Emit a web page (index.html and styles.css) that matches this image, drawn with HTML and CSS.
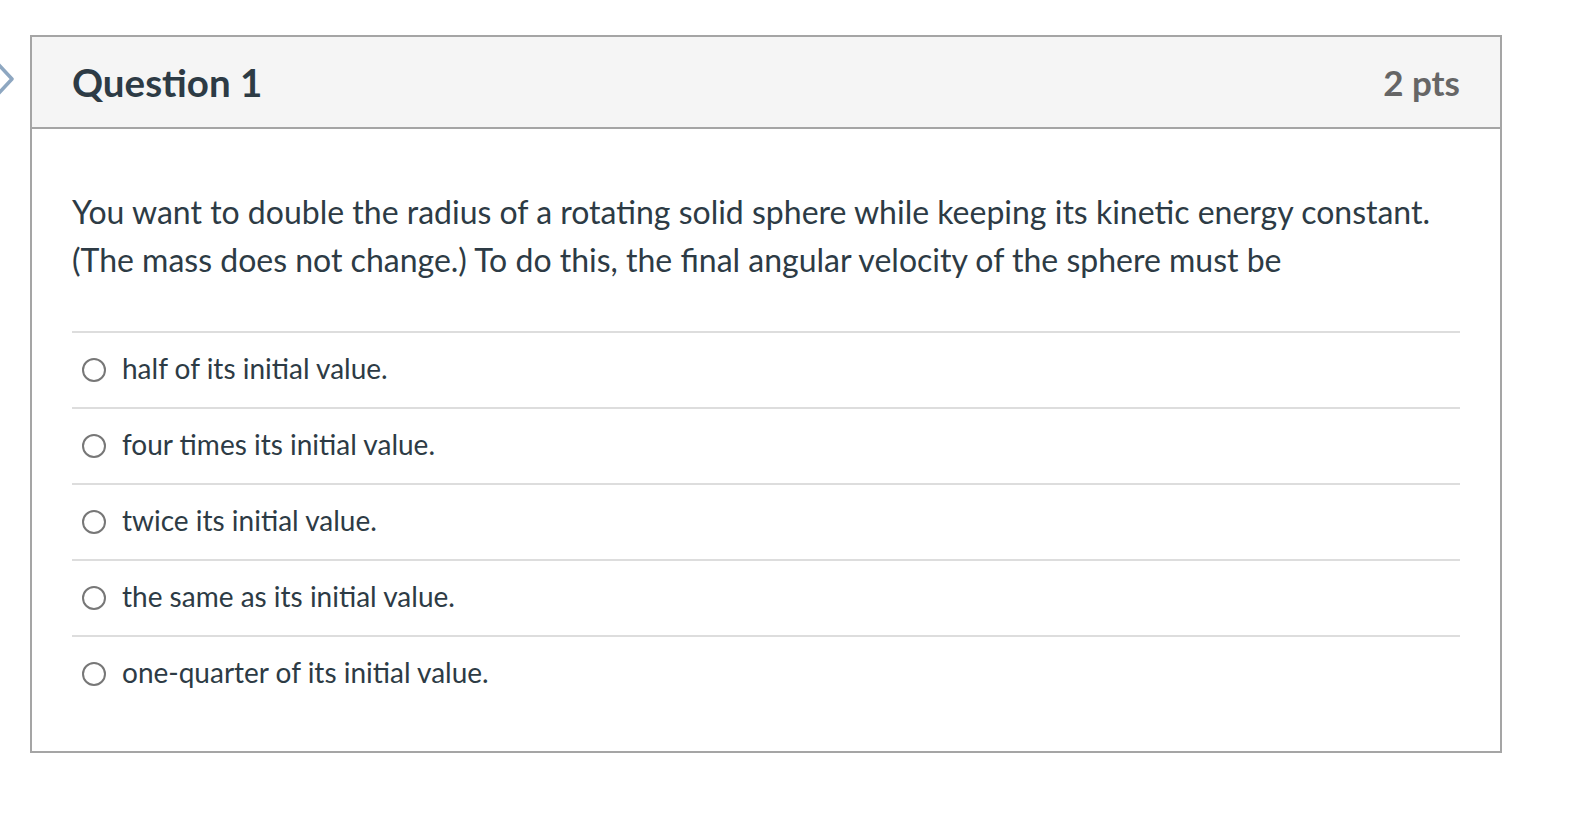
FILE: index.html
```html
<!DOCTYPE html>
<html lang="en">
<head>
<meta charset="utf-8">
<title>Question 1</title>
<link rel="stylesheet" href="styles.css">
</head>
<body>
<div class="page">
  <div class="nav-arrow">
    <svg width="16" height="34" viewBox="0 0 16 34" aria-hidden="true">
      <polyline points="-2,1 12,16 -2,31" fill="none" stroke="#8ea7c1" stroke-width="3.5" stroke-linejoin="round" stroke-linecap="round"/>
    </svg>
  </div>
  <div class="question">
    <div class="q-header">
      <span class="q-title">Question 1</span>
      <span class="q-points">2 pts</span>
    </div>
    <div class="q-body">
      <p class="q-text">You want to double the radius of a rotating solid sphere while keeping its kinetic energy constant. (The mass does not change.) To do this, the final angular velocity of the sphere must be</p>
      <div class="answers">
        <label class="answer"><span class="radio"></span><span class="answer-text">half of its initial value.</span></label>
        <label class="answer"><span class="radio"></span><span class="answer-text">four times its initial value.</span></label>
        <label class="answer"><span class="radio"></span><span class="answer-text">twice its initial value.</span></label>
        <label class="answer"><span class="radio"></span><span class="answer-text">the same as its initial value.</span></label>
        <label class="answer"><span class="radio"></span><span class="answer-text">one-quarter of its initial value.</span></label>
      </div>
    </div>
  </div>
</div>
</body>
</html>
```

FILE: styles.css
```css
* { box-sizing: border-box; }

body {
  margin: 0;
  background: #ffffff;
  font-family: Lato, "Open Sans", "Liberation Sans", sans-serif;
  color: #2d3b45;
}

.page {
  display: flex;
  align-items: flex-start;
  padding-top: 35px;
}

.nav-arrow {
  width: 30px;
  flex: none;
  padding-top: 28px;
}

.nav-arrow svg { display: block; }

.question {
  width: 1472px;
  flex: none;
  border: 2px solid #a5a5a5;
}

.q-header {
  height: 92px;
  background: #f5f5f5;
  border-bottom: 2px solid #a5a5a5;
  padding: 0 40px;
  display: flex;
  justify-content: space-between;
  align-items: center;
}

.q-title {
  font-weight: 700;
  font-size: 38.5px;
  color: #2d3b45;
}

.q-points {
  font-weight: 700;
  font-size: 35px;
  color: #666666;
}

.q-body {
  padding: 59px 40px 40px 40px;
}

.q-text {
  margin: 0 0 47px 0;
  font-size: 32px;
  line-height: 48px;
}

.answer {
  display: flex;
  align-items: center;
  height: 76px;
  border-top: 2px solid #dddddd;
}

.radio {
  width: 24px;
  height: 24px;
  flex: none;
  border: 2px solid #777777;
  border-radius: 50%;
  margin-left: 10px;
  margin-right: 16px;
}

.answer-text {
  font-size: 28px;
  margin-bottom: 4px;
}
```
